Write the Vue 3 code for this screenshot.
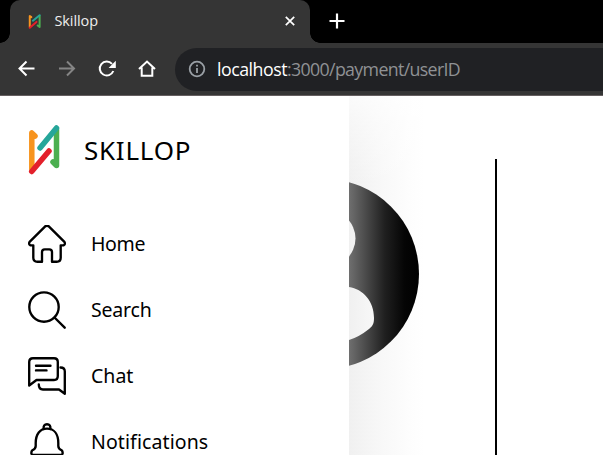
<script setup>
const menu = [
  { name: 'home', label: 'Home' },
  { name: 'search', label: 'Search' },
  { name: 'chat', label: 'Chat' },
  { name: 'bell', label: 'Notifications' },
]
</script>

<template>
  <div class="browser">
    <header class="tabs">
      <div class="tab">
        <svg class="favicon" viewBox="0 0 32 38">
          <g fill="none" stroke-width="5" stroke-linecap="round" stroke-linejoin="round">
            <path stroke="#f7941e" d="M8 8 4 5V33" />
            <path stroke="#4caf50" d="M29 5V33L24 29" />
            <path stroke="#26a69a" d="M12 17 29 3" />
            <path stroke="#e3202b" d="M4 35 21 20" />
          </g>
        </svg>
        <span class="tab-title">Skillop</span>
        <svg class="close" viewBox="0 0 10 10"><path d="M.8.8 9.2 9.2M9.2.8.8 9.2" /></svg>
      </div>
      <svg class="plus" viewBox="0 0 16 16"><path d="M8 .5v15M.5 8h15" /></svg>
    </header>
    <nav class="toolbar">
      <svg class="tool" viewBox="0 0 20 20"><path d="M17.500 9.500H2.500M9.500 2.500 2.500 9.500l7 7" /></svg>
      <svg class="tool dim" viewBox="0 0 20 20"><path d="M2 9.500h15M10 2.500l7 7-7 7" /></svg>
      <svg class="tool" viewBox="0 0 20 20">
        <path d="M16.300 12A7 7 0 1 1 15 4.800" /><path class="solid" d="M18.800 1.800v7.200h-7.200z" />
      </svg>
      <svg class="tool" viewBox="0 0 20 20"><path d="M2 10 10 2.500l8 7.500M4.700 8.500v8.300h10.600V8.500" /></svg>
      <div class="address">
        <svg class="info" viewBox="0 0 18 18">
          <circle cx="9" cy="9" r="7.300" /><path d="M9 8v5M9 4.800v1.700" />
        </svg>
        <span class="url"><b>localhost</b>:3000/payment/userID</span>
      </div>
    </nav>
    <main class="page">
      <aside class="sidebar">
        <div class="brand">
          <svg class="logo" viewBox="0 0 32 50">
            <g fill="none" stroke-width="5.500" stroke-linecap="round" stroke-linejoin="round">
              <path stroke="#f7941e" d="M7 11 3.800 8V44" />
              <path stroke="#4caf50" d="M28.500 5V40.500L25 37" />
              <path stroke="#26a69a" d="M12 23 28.500 3" />
              <path stroke="#e3202b" d="M3.700 46.500 21 26" />
            </g>
          </svg>
          <span class="brand-name">SKILLOP</span>
        </div>
        <div v-for="item in menu" :key="item.name" class="item">
          <svg class="icon" viewBox="0 0 38 38">
            <template v-if="item.name === 'home'">
              <path d="M5.300 20.300H2.500Q.2 19.300 1.600 16.900L16.700 1.800Q19 0 21.300 1.800L36.400 16.900Q37.800 19.300 35.500 20.300H32.700V32.700Q32.700 36.700 28.700 36.700H24V27Q24 24.300 21.300 24.300H16.700Q14 24.300 14 27V36.700H9.300Q5.300 36.700 5.300 32.700Z" />
            </template>
            <template v-else-if="item.name === 'search'">
              <circle cx="16" cy="16" r="14.700" /><path d="M26.500 26.500 36.700 36.700" />
            </template>
            <template v-else-if="item.name === 'chat'">
              <path d="M1.200 28.500V5Q1.200 1.200 5 1.200H26Q29.800 1.200 29.800 5V19Q29.800 23 26 23H8.500Z" />
              <path d="M8 8.700H22.500M8 13.400H18.500" />
              <path d="M32.500 10.500Q36.800 10.500 36.800 14.500V36.700L31 32.500H15Q10.800 32.500 10.800 27.500" />
            </template>
            <template v-else>
              <path d="M15.600 6Q15.200 1.200 19 1.200T22.400 6" />
              <circle cx="19" cy="4.700" r=".6" fill="#fff" stroke="none" />
              <path d="M7.700 20C7.700 11 12 5.600 19 5.600S30.300 11 30.300 20V23Q30.300 26 34 27.500Q36 32 32 32H6Q2 32 4 27.500Q7.700 26 7.700 23Z" />
            </template>
          </svg>
          <span class="label" :class="item.name">{{ item.label }}</span>
        </div>
      </aside>
      <section class="content">
        <svg class="avatar" viewBox="0 0 71 190">
          <defs>
            <clipPath id="disc"><circle cx="-25.200" cy="95" r="95.200" /></clipPath>
            <linearGradient id="shade" x1="0" x2="1">
              <stop offset="0" stop-color="#6f6f6f" />
              <stop offset=".2" stop-color="#505050" />
              <stop offset=".5" stop-color="#202020" />
              <stop offset=".78" stop-color="#050505" />
              <stop offset="1" stop-color="#000" />
            </linearGradient>
            <linearGradient id="pale" gradientUnits="userSpaceOnUse" x1="0" x2="35">
              <stop offset="0" stop-color="#f0f0f0" /><stop offset="1" stop-color="#fbfbfb" />
            </linearGradient>
          </defs>
          <rect width="71" height="190" fill="url(#shade)" clip-path="url(#disc)" />
          <ellipse cx="-25.200" cy="59.500" rx="31.700" ry="29.500" fill="url(#pale)" />
          <path fill="url(#pale)" d="M0 108C14 110 25 122 25 139C25 144 24 147 20 150Q10 158 0 161Z" />
        </svg>
        <div class="rule"></div>
      </section>
    </main>
  </div>
</template>

<style>
body { margin: 0; overflow: hidden; }
</style>

<style scoped>
.browser { width: 603px; height: 455px; overflow: hidden; display: flex; flex-direction: column; background: #fff; }
svg { display: block; flex: none; }
.tabs { height: 43px; flex: none; background: #000; display: flex; align-items: flex-start; }
.tab {
  box-sizing: border-box; width: 300px; height: 43px; margin-left: 9.500px; padding: 0 15px 1px 18px;
  border-radius: 10px 10px 0 0; background: #353535; display: flex; align-items: center; position: relative;
}
.tab::before, .tab::after { content: ''; position: absolute; bottom: 0; width: 10px; height: 10px; }
.tab::before { left: -10px; background: radial-gradient(circle at 0 0, transparent 9.500px, #353535 10px); }
.tab::after { right: -10px; background: radial-gradient(circle at 100% 0, transparent 9.500px, #353535 10px); }
.favicon { width: 13px; height: 15px; }
.tab-title { margin-left: 14px; flex: 1; font: 14.500px/20px 'Open Sans', sans-serif; letter-spacing: -.1px; color: #eee; }
.close { width: 10px; height: 10px; stroke: #fff; stroke-width: 1.700; }
.plus { width: 16px; height: 16px; margin: 13px 0 0 19px; stroke: #fff; stroke-width: 2.200; }
.toolbar {
  box-sizing: border-box; height: 53px; flex: none; padding: 0 0 0 17px; background: #353535;
  border-bottom: 1px solid #655f60; display: flex; align-items: center; gap: 20px;
}
.tool { width: 20px; height: 20px; fill: none; stroke: #fff; stroke-width: 2; }
.tool .solid { fill: #fff; stroke: none; }
.dim { stroke: #858585; }
.address {
  box-sizing: border-box; height: 43px; flex: 1; margin: 0 0 0 -2.500px; padding-left: 13.500px;
  border-radius: 21.500px 0 0 21.500px; background: #202124; display: flex; align-items: center;
}
.info { width: 18px; height: 18px; fill: none; stroke: #9aa0a6; stroke-width: 1.800; }
.url { margin-left: 11px; font: 17.800px/24px 'Open Sans', sans-serif; letter-spacing: -.66px; color: #8f9194; white-space: nowrap; }
.url b { font-weight: 400; color: #fff; letter-spacing: -.5px; }
.page { flex: 1; min-height: 0; display: flex; }
.sidebar { width: 349.400px; flex: none; background: #fff; color: #000; }
.brand { display: flex; align-items: center; height: 50px; padding: 29px 0 36px 28px; }
.logo { width: 32px; height: 50px; }
.brand-name { margin-left: 24px; font: 26px/36px 'Noto Sans', sans-serif; letter-spacing: .75px; }
.item { display: flex; align-items: center; height: 66px; padding-left: 28px; font: 19.500px/28px 'Noto Sans', sans-serif; }
.icon { width: 38px; height: 38px; fill: none; stroke: #000; stroke-width: 2.350; stroke-linecap: round; stroke-linejoin: round; }
.label { margin-left: 25px; }
.home { letter-spacing: -.35px; }
.search { letter-spacing: -.2px; }
.bell { letter-spacing: .1px; }
.content {
  flex: 1; display: flex; align-items: flex-start;
  background:
    linear-gradient(180deg, rgba(255, 255, 255, .7), rgba(255, 255, 255, .4) 30px, rgba(255, 255, 255, 0) 90px),
    linear-gradient(90deg, #f0f0f0, #f7f7f7 28px, #fdfdfd 60px, #fff 76px);
}
.avatar { width: 71px; height: 190px; margin-top: 83px; }
.rule { width: 2px; height: 296px; margin: 63px 0 0 74.600px; background: #000; }
</style>
